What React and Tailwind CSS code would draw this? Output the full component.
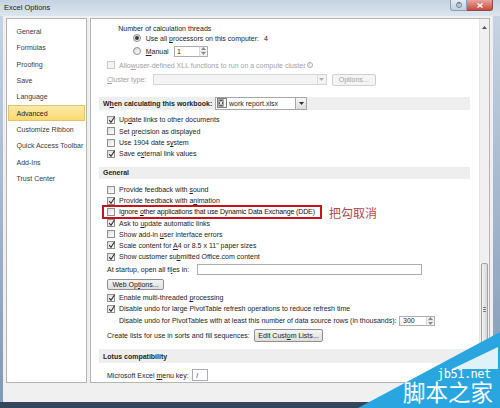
import React from "react";

function Check({ checked, disabled }) {
  return (
    <span
      className={
        disabled
          ? "relative w-[8px] h-[8px] shrink-0 border border-[#cacaca] bg-[#f5f5f5]"
          : "relative w-[8px] h-[8px] shrink-0 border border-[#8e8f8f] bg-gradient-to-br from-[#dedede] to-white"
      }
    >
      {checked && (
        <svg className="absolute left-0 top-[-1px]" width="8" height="8" viewBox="0 0 8 8">
          <path d="M1.2 4.1 L3 6.3 L6.6 0.8" fill="none" stroke="#2e2e2e" strokeWidth="1.1" />
        </svg>
      )}
    </span>
  );
}

function Radio({ on }) {
  return (
    <span className="w-[8px] h-[8px] shrink-0 rounded-full border border-[#8e8f8f] bg-gradient-to-br from-[#d8d8d8] to-white flex items-center justify-center">
      {on && <span className="w-[4px] h-[4px] rounded-full bg-[#3b3b3b]" />}
    </span>
  );
}

function Spin() {
  return (
    <span className="w-[8px] h-full border-l border-[#dadada] flex flex-col bg-[#f3f3f3]">
      <span className="flex-1 flex items-center justify-center">
        <svg width="5" height="3" viewBox="0 0 5 3">
          <path d="M0 3 L2.5 0 L5 3Z" fill="#8a8a8a" />
        </svg>
      </span>
      <span className="flex-1 flex items-center justify-center border-t border-[#e2e2e2]">
        <svg width="5" height="3" viewBox="0 0 5 3">
          <path d="M0 0 L2.5 3 L5 0Z" fill="#8a8a8a" />
        </svg>
      </span>
    </span>
  );
}

function Arrow({ color = "#444" }) {
  return (
    <svg width="5" height="3" viewBox="0 0 5 3">
      <path d="M0 0 L2.5 3 L5 0Z" fill={color} />
    </svg>
  );
}

function CheckRow({ checked, h, children }) {
  return (
    <div className={"flex items-center pl-[8px] gap-[4px] " + h}>
      <Check checked={checked} />
      <span>{children}</span>
    </div>
  );
}

function Header({ h, mt, children }) {
  return (
    <div className={"flex items-center bg-[#eeeeee] pl-[4px] font-bold text-[#262626] " + h + " " + mt}>
      {children}
    </div>
  );
}

const navItems = [
  "General",
  "Formulas",
  "Proofing",
  "Save",
  "Language",
  "Advanced",
  "Customize Ribbon",
  "Quick Access Toolbar",
  "Add-Ins",
  "Trust Center",
];

export default function App() {
  return (
    <div className="relative w-[500px] h-[408px] overflow-hidden flex flex-col bg-gradient-to-b from-[#c9d6e4] to-[#7f98b5] font-['Liberation_Sans',Arial,sans-serif] text-[7px] leading-none text-[#232323]">
      {/* title bar */}
      <div className="h-[16px] flex items-start justify-between bg-gradient-to-b from-[#c4d2e1] to-[#dde6ef] pr-[7px]">
        <span className="self-center pl-[4px] text-[7.5px] text-[#1b1b1b]">Excel Options</span>
        <div className="flex">
          <div className="w-[17px] h-[11px] rounded-bl-[3px] border border-t-0 border-[#8d9db2] bg-gradient-to-b from-[#e3eaf2] to-[#c2cfde] flex items-center justify-center">
            <span className="w-[6px] h-[6px] rounded-full border border-[#6f7f94] text-[4.5px] font-bold text-[#4d5d73] flex items-center justify-center">?</span>
          </div>
          <div className="w-[26px] h-[11px] rounded-br-[3px] border border-t-0 border-l-0 border-[#8e4a46] bg-gradient-to-b from-[#e7a59d] to-[#c9453b] flex items-center justify-center">
            <svg width="6" height="5" viewBox="0 0 6 5">
              <path d="M0.5 0.5 L5.5 4.5 M5.5 0.5 L0.5 4.5" stroke="white" strokeWidth="1.4" />
            </svg>
          </div>
        </div>
      </div>

      {/* body */}
      <div className="flex-1 flex pl-[3px] pr-[7px]">
        <div className="flex-1 bg-[#f0f0f0] flex flex-col pt-[2px] pl-[3px] pr-[3px]">
          <div className="h-[365px] flex gap-[3px]">
            {/* left nav */}
            <div className="w-[81px] border border-[#b5b5b5] bg-white pt-[4.5px] px-[1px]">
              {navItems.map((item) =>
                item === "Advanced" ? (
                  <div
                    key={item}
                    className="h-[16.3px] flex items-center pl-[7.5px] border border-[#e3c26a] bg-gradient-to-b from-[#fdeaa8] to-[#fbd96f] text-[#1c1c1c]"
                  >
                    {item}
                  </div>
                ) : (
                  <div key={item} className="h-[16.3px] flex items-center pl-[8.5px] text-[#3a3a3a]">
                    {item}
                  </div>
                )
              )}
            </div>

            {/* right panel */}
            <div className="flex-1 border border-[#b5b5b5] bg-white flex overflow-hidden">
              <div className="flex-1 flex flex-col pt-[4px] pl-[8px] pr-[9px]">
                <div className="h-[11px] flex items-center pl-[19.3px] text-[#1c1c1c]">Number of calculation threads</div>
                <div className="h-[9px] flex items-center pl-[34px] gap-[4.7px]">
                  <Radio on />
                  <span>
                    Use all <u>p</u>rocessors on this computer:<span className="ml-[5px]">4</span>
                  </span>
                </div>
                <div className="mt-[2px] h-[13px] flex items-center pl-[34px]">
                  <Radio />
                  <span className="ml-[4.7px] w-[28.3px]">
                    <u>M</u>anual
                  </span>
                  <span className="w-[34px] h-[11px] border border-[#abadb3] flex items-stretch">
                    <span className="flex-1 pl-[2px] flex items-center">1</span>
                    <Spin />
                  </span>
                </div>
                <div className="mt-[2px] h-[11px] flex items-center pl-[8px] gap-[4px] text-[#a2a2a2]">
                  <Check disabled />
                  <span className="flex items-center">
                    Allo<u>w</u> user-defined XLL functions to run on a compute cluster
                    <span className="ml-[1px] w-[6px] h-[6px] rounded-full border border-[#a8a8a8] text-[4.5px] flex items-center justify-center">i</span>
                  </span>
                </div>
                <div className="mt-[3px] h-[12px] flex items-center pl-[8px] text-[#a2a2a2]">
                  <span className="w-[45.7px]">
                    <u>C</u>luster type:
                  </span>
                  <span className="w-[174px] h-[11px] border border-[#d4d4d4] bg-[#f4f4f4] flex justify-end">
                    <span className="w-[9px] border-l border-[#dcdcdc] flex items-center justify-center">
                      <Arrow color="#b0b0b0" />
                    </span>
                  </span>
                  <span className="ml-[5px] w-[44px] h-[12px] border border-[#cfcfcf] rounded-[2px] bg-[#f4f4f4] flex items-center justify-center">
                    Options...
                  </span>
                </div>

                <Header h="h-[13px]" mt="mt-[11px]">
                  <span className="w-[112px]">
                    W<u>h</u>en calculating this workbook:
                  </span>
                  <span className="w-[92px] h-[13px] border border-[#a6a6a6] bg-white flex items-center font-normal">
                    <svg className="ml-[1px]" width="10" height="10" viewBox="0 0 10 10">
                      <rect x="0.5" y="0.5" width="9" height="9" fill="#f6f6f6" stroke="#7d7d7d" />
                      <rect x="1.5" y="1.5" width="5" height="7" fill="#4d4d4d" />
                      <path d="M2.5 2.7 L5.5 7.3 M5.5 2.7 L2.5 7.3" stroke="white" strokeWidth="1.1" />
                    </svg>
                    <span className="ml-[2px] flex-1">work report.xlsx</span>
                    <span className="w-[11px] h-full border-l border-[#a6a6a6] bg-gradient-to-b from-[#f6f6f6] to-[#dcdcdc] flex items-center justify-center">
                      <Arrow color="#303030" />
                    </span>
                  </span>
                </Header>

                <div className="mt-[4.3px]" />
                <CheckRow checked h="h-[11.4px]">
                  Up<u>d</u>ate links to other documents
                </CheckRow>
                <CheckRow h="h-[11.4px]">
                  Set <u>p</u>recision as displayed
                </CheckRow>
                <CheckRow h="h-[11.4px]">
                  Use 1904 date s<u>y</u>stem
                </CheckRow>
                <CheckRow checked h="h-[11.4px]">
                  Save e<u>x</u>ternal link values
                </CheckRow>

                <Header h="h-[12.5px]" mt="mt-[7.1px]">
                  General
                </Header>

                <div className="mt-[4.9px]" />
                <CheckRow h="h-[11.2px]">
                  Provide feedback with <u>s</u>ound
                </CheckRow>
                <CheckRow checked h="h-[11.2px]">
                  Provide feedback with a<u>n</u>imation
                </CheckRow>
                <CheckRow h="h-[11.2px]">
                  <span className="tracking-[-0.13px] text-[#111]">
                    Ignore <u>o</u>ther applications that use Dynamic Data Exchange (DDE)
                  </span>
                </CheckRow>
                <CheckRow checked h="h-[11.2px]">
                  Ask to <u>u</u>pdate automatic links
                </CheckRow>
                <CheckRow h="h-[11.2px]">
                  Show add-in <u>u</u>ser interface errors
                </CheckRow>
                <CheckRow checked h="h-[11.2px]">
                  Scale content for <u>A</u>4 or 8.5 x 11" paper sizes
                </CheckRow>
                <CheckRow checked h="h-[11.2px]">
                  Show customer su<u>b</u>mitted Office.com content
                </CheckRow>

                <div className="mt-[0.7px] h-[13px] flex items-center pl-[8px]">
                  <span className="w-[89.7px]">
                    At startup, open all fi<u>l</u>es in:
                  </span>
                  <span className="w-[225.6px] h-[11px] border border-[#abadb3] bg-white" />
                </div>
                <div className="mt-[2.5px] h-[12px] flex items-center pl-[8px]">
                  <span className="w-[57px] h-[11.4px] border border-[#8f8f8f] rounded-[2px] bg-gradient-to-b from-[#f4f4f4] to-[#dedede] flex items-center justify-center">
                    Web Op<u>t</u>ions...
                  </span>
                </div>
                <div className="mt-[1.8px]" />
                <CheckRow checked h="h-[11px]">
                  Enable multi-threaded <u>p</u>rocessing
                </CheckRow>
                <CheckRow checked h="h-[11px]">
                  Disable undo for large PivotTable refresh operations to reduce refresh time
                </CheckRow>
                <div className="mt-[0.7px] h-[12.5px] flex items-center pl-[20px]">
                  <span className="w-[280px]">
                    Disable undo for PivotTables with at least this number of data source rows (in thousands):
                  </span>
                  <span className="w-[36px] h-[10px] border border-[#abadb3] flex items-stretch">
                    <span className="flex-1 pl-[3px] flex items-center">300</span>
                    <Spin />
                  </span>
                </div>
                <div className="mt-[2px] h-[13px] flex items-center pl-[8px]">
                  <span className="w-[147px]">Create lists for use in sorts and fill sequences:</span>
                  <span className="w-[69px] h-[12.7px] border border-[#8f8f8f] rounded-[2px] bg-gradient-to-b from-[#f4f4f4] to-[#dedede] flex items-center justify-center">
                    Edit Cust<u>o</u>m Lists...
                  </span>
                </div>

                <Header h="h-[14px]" mt="mt-[7px]">
                  Lotus compatibility
                </Header>

                <div className="mt-[5px] h-[14px] flex items-center pl-[8px]">
                  <span className="w-[85.3px]">
                    Microsoft Excel <u>m</u>enu key:
                  </span>
                  <span className="w-[16px] h-[12.7px] border border-[#abadb3] bg-white flex items-center pl-[3px]">/</span>
                </div>
              </div>

              {/* scrollbar */}
              <div className="w-[10px] bg-[#f0f0f0] border-l border-[#e6e6e6] flex flex-col">
                <div className="h-[17px] flex items-center justify-center">
                  <svg width="5" height="3" viewBox="0 0 5 3">
                    <path d="M0 3 L2.5 0 L5 3Z" fill="#555" />
                  </svg>
                </div>
                <div className="h-[227px]" />
                <div className="h-[110px] mx-[1px] border border-[#a3a3a3] rounded-[2px] bg-gradient-to-r from-[#f2f2f2] to-[#d8d8d8] flex flex-col items-center justify-start pt-[43px] gap-[1px]">
                  <span className="w-[3px] h-px bg-[#7c7c7c]" />
                  <span className="w-[3px] h-px bg-[#7c7c7c]" />
                  <span className="w-[3px] h-px bg-[#7c7c7c]" />
                </div>
              </div>
            </div>
          </div>
          <div className="flex-1" />
        </div>
      </div>
      <div className="h-[6px] bg-[#34465b]" />

      {/* annotation */}
      <div className="absolute left-[101.7px] top-[205px] w-[220px] h-[14.3px] border-[2.5px] border-[#c4151c]" />
      <span className="absolute left-[329px] top-[207px] text-[12px] text-[#b0484a] font-['Noto_Sans_CJK_SC',sans-serif]">
        把勾取消
      </span>

      {/* watermark */}
      <svg className="absolute left-0 top-0" width="500" height="408" viewBox="0 0 500 408">
        <polygon points="358,408 500,332 500,408" fill="#29a6df" />
        <polygon points="452,369 498,347 498,369" fill="#ffffff" opacity="0.85" />
      </svg>
      <span className="absolute left-[437px] top-[369px] h-[11px] text-[12px] leading-[11px] text-white font-['DejaVu_Sans_Mono',monospace] tracking-[-0.5px]">
        jb51.net
      </span>
      <span className="absolute left-[403px] top-[380px] text-[22.5px] leading-none text-white font-['Noto_Sans_CJK_SC',sans-serif]">
        脚本之家
      </span>
    </div>
  );
}
